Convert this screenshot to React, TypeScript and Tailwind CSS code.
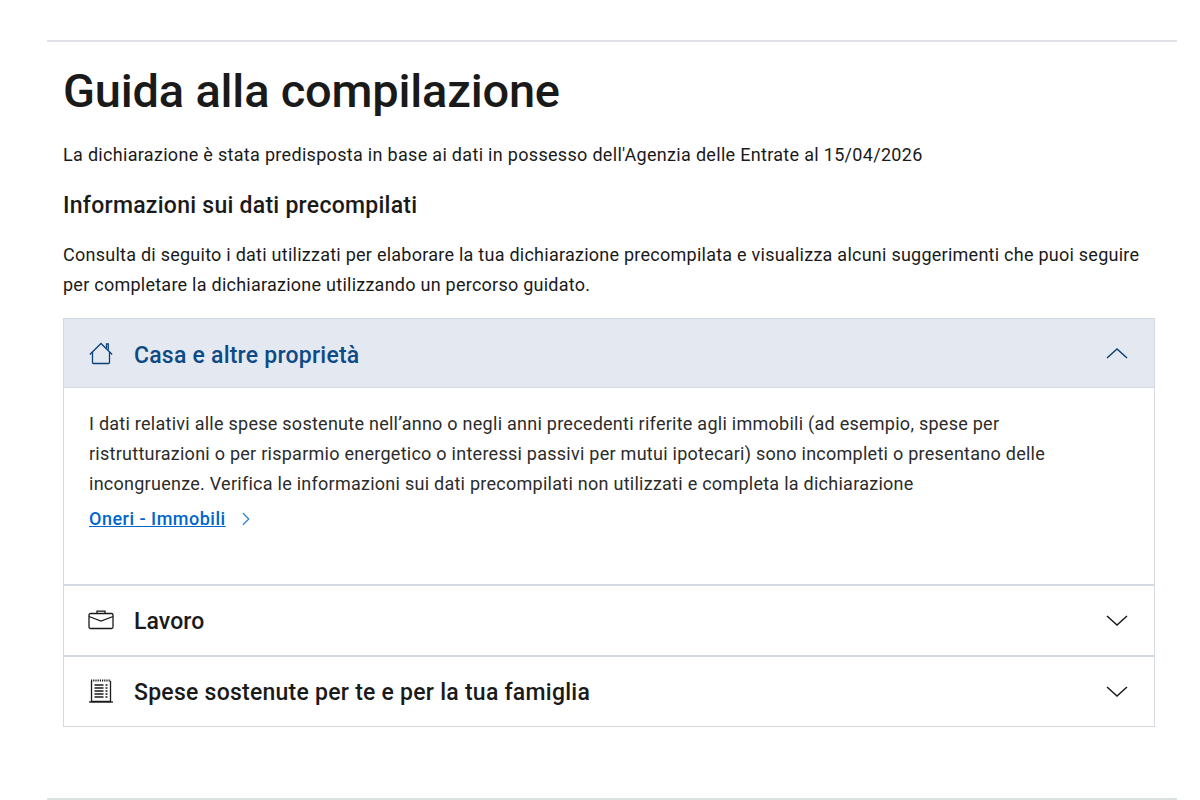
import { ChevronRight } from "lucide-react";

function HomeIcon() {
  return (
    <svg width="24" height="24" viewBox="0 -1 24 24" fill="none" stroke="#0d4278" strokeWidth="1.3" className="shrink-0">
      <path d="M0.8 12.5 12 1.5l11.2 11" />
      <path d="M3.5 10v10.5a1 1 0 0 0 1 1h15a1 1 0 0 0 1-1V10" />
      <path d="M17.5 6V1.8h1.8v6" />
    </svg>
  );
}

function BriefcaseIcon() {
  return (
    <svg width="26" height="24" viewBox="0 2 26 24" fill="none" stroke="#1a1a1a" strokeWidth="1.3" className="shrink-0">
      <rect x="1" y="6.5" width="24" height="15" rx="1.5" />
      <path d="M1 9.5l12 4.5 12-4.5" />
      <path d="M9 6.5V4.2h8v2.3" />
    </svg>
  );
}

function ListIcon() {
  return (
    <svg width="26" height="26" viewBox="0 1 26 26" fill="none" stroke="#1a1a1a" strokeWidth="1.3" className="shrink-0">
      <path d="M3 2.5h20" strokeDasharray="1.2 1" strokeWidth="2" />
      <path d="M3.5 3v20.5h19V3" />
      <path d="M1 24h24" />
      <path d="M6.5 7h9M6.5 10h9M6.5 13h9M6.5 16h9M6.5 19h9" strokeWidth="1.4" />
      <path d="M17.5 7h2M17.5 10h2M17.5 13h2M17.5 16h2M17.5 19h2" strokeWidth="1.4" />
    </svg>
  );
}

function Chevron({ up, color }: { up?: boolean; color: string }) {
  return (
    <svg width="22" height="12" viewBox="0 0 22 12" fill="none" stroke={color} strokeWidth="1.5" className="shrink-0">
      <path d={up ? "M1 11 11 2l10 9" : "M1 1l10 9 10-9"} />
    </svg>
  );
}

export default function App() {
  return (
    <div className="min-h-[800px] bg-white pt-10 pl-[47px] pr-[23px] font-['Roboto','Noto_Sans',sans-serif] text-[#1a1a1a]">
      <div className="border-t-2 border-[#dfe1e6] px-4">
        <h1 className="mt-[15px] text-[47px] leading-[68px] font-medium tracking-[-0.2px]">Guida alla compilazione</h1>
        <p className="mt-[15px] text-[18px] leading-[30px] tracking-[0.31px]">
          La dichiarazione è stata predisposta in base ai dati in possesso dell'Agenzia delle Entrate al 15/04/2026
        </p>
        <h2 className="mt-[20px] text-[23px] leading-[32px] font-medium tracking-[0.26px]">Informazioni sui dati precompilati</h2>
        <p className="mt-[18px] w-[1092px] text-[18px] leading-[30px] tracking-[0.25px]">
          Consulta di seguito i dati utilizzati per elaborare la tua dichiarazione precompilata e visualizza alcuni suggerimenti che puoi seguire
          <br />
          per completare la dichiarazione utilizzando un percorso guidato.
        </p>

        <div className="mt-[18px] w-[1092px] border border-[#d5d9e2]">
          <div className="flex h-[69px] items-center bg-[#e4e9f1] pr-[26px] pl-[25px] border-b border-[#d5d9e2]">
            <HomeIcon />
            <span className="ml-[21px] flex-1 pt-[6px] text-[23px] font-medium tracking-[0.23px] text-[#0d4a86]">Casa e altre proprietà</span>
            <Chevron up color="#0d4278" />
          </div>
          <div className="h-[196px] px-[25px] pt-[21px] text-[18px] leading-[30px] tracking-[0.26px] text-[#2b2b2b]">
            <p>
              I dati relativi alle spese sostenute nell’anno o negli anni precedenti riferite agli immobili (ad esempio, spese per
              <br />
              ristrutturazioni o per risparmio energetico o interessi passivi per mutui ipotecari) sono incompleti o presentano delle
              <br />
              incongruenze. Verifica le informazioni sui dati precompilati non utilizzati e completa la dichiarazione
            </p>
            <a href="#" className="mt-[5px] flex items-center font-medium tracking-[0.5px] text-[#0066cc]">
              <span className="underline">Oneri - Immobili</span>
              <ChevronRight size={22} strokeWidth={1.3} className="ml-[9px] text-[#2f7fcf]" />
            </a>
          </div>
          <div className="flex h-[71px] items-center border-t-2 border-[#d5d9e2] pr-[26px] pl-[24px]">
            <BriefcaseIcon />
            <span className="ml-[20px] flex-1 pt-[4px] text-[23px] font-medium tracking-[0.1px]">Lavoro</span>
            <Chevron color="#1a1a1a" />
          </div>
          <div className="flex h-[71px] items-center border-t-2 border-[#d5d9e2] pr-[26px] pl-[24px]">
            <ListIcon />
            <span className="ml-[20px] flex-1 pt-[4px] text-[23px] font-medium tracking-[0.25px]">Spese sostenute per te e per la tua famiglia</span>
            <Chevron color="#1a1a1a" />
          </div>
        </div>
      </div>
      <div className="mt-[71px] border-t-2 border-[#dbe3e0]" />
    </div>
  );
}
